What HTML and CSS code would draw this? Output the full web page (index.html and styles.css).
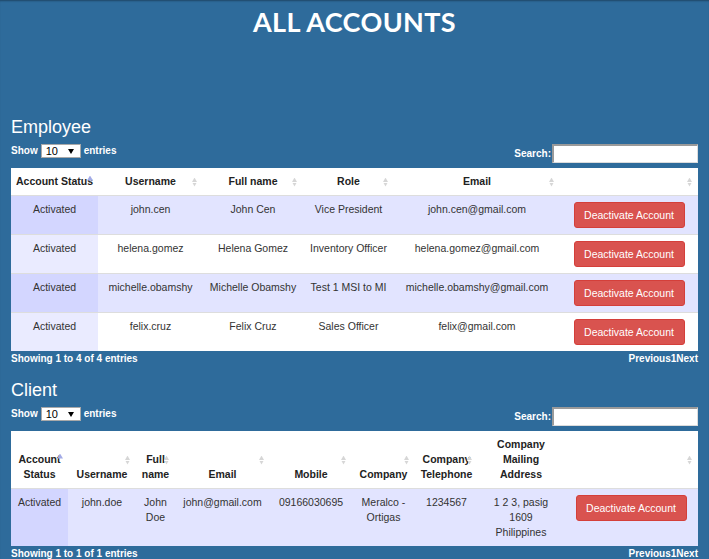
FILE: index.html
```html
<!DOCTYPE html>
<html lang="en">
<head>
<meta charset="utf-8">
<title>All Accounts</title>
<link rel="stylesheet" href="styles.css">
</head>
<body>
<h1 class="title">ALL ACCOUNTS</h1>

<section class="block">
  <h3 class="block-title">Employee</h3>
  <div class="dt-top">
    <div class="length">Show <div class="select"><span>10</span><i class="caret"></i></div> entries</div>
    <label class="filter">Search:<input type="text"></label>
  </div>
  <table class="dt emp">
    <colgroup>
      <col class="e1"><col class="e2"><col class="e3"><col class="e4"><col class="e5"><col class="e6">
    </colgroup>
    <thead>
      <tr>
        <th class="asc">Account Status</th>
        <th class="both">Username</th>
        <th class="both">Full name</th>
        <th class="both">Role</th>
        <th class="both">Email</th>
        <th class="both"></th>
      </tr>
    </thead>
    <tbody>
      <tr class="odd">
        <td class="s1">Activated</td><td>john.cen</td><td>John Cen</td><td>Vice President</td><td>john.cen@gmail.com</td>
        <td><button class="btn-danger" type="button">Deactivate Account</button></td>
      </tr>
      <tr class="even">
        <td class="s1">Activated</td><td>helena.gomez</td><td>Helena Gomez</td><td>Inventory Officer</td><td>helena.gomez@gmail.com</td>
        <td><button class="btn-danger" type="button">Deactivate Account</button></td>
      </tr>
      <tr class="odd">
        <td class="s1">Activated</td><td>michelle.obamshy</td><td>Michelle Obamshy</td><td>Test 1 MSI to MI</td><td>michelle.obamshy@gmail.com</td>
        <td><button class="btn-danger" type="button">Deactivate Account</button></td>
      </tr>
      <tr class="even">
        <td class="s1">Activated</td><td>felix.cruz</td><td>Felix Cruz</td><td>Sales Officer</td><td>felix@gmail.com</td>
        <td><button class="btn-danger" type="button">Deactivate Account</button></td>
      </tr>
    </tbody>
  </table>
  <div class="dt-bottom"><span>Showing 1 to 4 of 4 entries</span><span>Previous1Next</span></div>
</section>

<section class="block block-client">
  <h3 class="block-title">Client</h3>
  <div class="dt-top">
    <div class="length">Show <div class="select"><span>10</span><i class="caret"></i></div> entries</div>
    <label class="filter">Search:<input type="text"></label>
  </div>
  <table class="dt cli">
    <colgroup>
      <col class="c1"><col class="c2"><col class="c3"><col class="c4"><col class="c5"><col class="c6"><col class="c7"><col class="c8"><col class="c9">
    </colgroup>
    <thead>
      <tr>
        <th class="asc">Account Status</th>
        <th class="both">Username</th>
        <th class="both">Full name</th>
        <th class="both">Email</th>
        <th class="both">Mobile</th>
        <th class="both">Company</th>
        <th class="both">Company Telephone</th>
        <th>Company Mailing Address</th>
        <th class="both"></th>
      </tr>
    </thead>
    <tbody>
      <tr class="odd">
        <td class="s1">Activated</td><td>john.doe</td><td>John Doe</td><td>john@gmail.com</td><td>09166030695</td>
        <td>Meralco - Ortigas</td><td>1234567</td><td>1 2 3, pasig 1609 Philippines</td>
        <td><button class="btn-danger" type="button">Deactivate Account</button></td>
      </tr>
    </tbody>
  </table>
  <div class="dt-bottom"><span>Showing 1 to 1 of 1 entries</span><span>Previous1Next</span></div>
</section>
</body>
</html>
```
FILE: styles.css
```css
html {
  background: #2e6b9b;
}
body {
  margin: 0;
  padding: 0 11px;
  min-height: 559px;
  box-sizing: border-box;
  background: #2e6b9b;
  box-shadow: inset 0 2px 2px -1px rgba(0, 0, 0, 0.35);
  font-family: "Liberation Sans", Arial, sans-serif;
  font-size: 10.5px;
  color: #333;
}

.title {
  margin: 6px 0 0;
  font-family: Lato, "Open Sans", sans-serif;
  font-weight: 700;
  font-size: 27px;
  line-height: 32px;
  text-align: center;
  color: #fff;
  letter-spacing: 0.4px;
}

.block-title {
  margin: 79px 0 0;
  font-size: 18px;
  font-weight: 400;
  line-height: 20px;
  color: #fff;
}
.block-client .block-title {
  margin-top: 15px;
}

.dt-top {
  display: flex;
  justify-content: space-between;
  align-items: flex-start;
  margin-top: 7px;
  font-size: 10px;
  font-weight: 700;
  color: #fff;
}
.length {
  display: flex;
  align-items: center;
  gap: 3px;
  height: 14px;
  line-height: 14px;
}
.select {
  display: flex;
  align-items: center;
  box-sizing: border-box;
  width: 40px;
  height: 14px;
  padding-left: 4px;
  background: #fff;
  border: 1px solid #a9a9a9;
  color: #000;
  font-size: 11px;
  font-weight: 400;
}
.caret {
  width: 0;
  height: 0;
  margin-left: auto;
  margin-right: 6px;
  border-left: 3px solid transparent;
  border-right: 3px solid transparent;
  border-top: 5px solid #000;
}
.filter {
  display: flex;
  align-items: center;
  line-height: 13px;
}
.filter input {
  box-sizing: border-box;
  width: 146px;
  height: 19px;
  margin: 0 0 0 1px;
  padding: 0 2px;
  background: #fff;
  border-style: solid;
  border-width: 2px 1px 1px 2px;
  border-color: #9a9a9a #dcdcdc #dcdcdc #9a9a9a;
  font-family: "Liberation Sans", Arial, sans-serif;
  font-size: 10.5px;
  outline: none;
}

.dt {
  width: 100%;
  margin-top: 5px;
  table-layout: fixed;
  border-collapse: separate;
  border-spacing: 0;
  background: #fff;
}
.emp .e1 { width: 87px; }
.emp .e2 { width: 105px; }
.emp .e3 { width: 100px; }
.emp .e4 { width: 91px; }
.emp .e5 { width: 166px; }
.emp .e6 { width: 138px; }

.cli .c1 { width: 57px; }
.cli .c2 { width: 68px; }
.cli .c3 { width: 39px; }
.cli .c4 { width: 95px; }
.cli .c5 { width: 82px; }
.cli .c6 { width: 63px; }
.cli .c7 { width: 63px; }
.cli .c8 { width: 86px; }
.cli .c9 { width: 134px; }

.dt th {
  position: relative;
  padding: 6px 5px;
  line-height: 15px;
  font-weight: 700;
  color: #222;
  text-align: center;
  vertical-align: bottom;
}
.emp th,
.emp td {
  white-space: nowrap;
}
.dt th.both::after,
.dt th.asc::after {
  content: "";
  position: absolute;
  top: 50%;
}
.dt th.both::after {
  right: 6px;
  width: 5px;
  height: 9px;
  margin-top: -4px;
  background: linear-gradient(#d6d6d6 0 45%, #fff 45% 55%, #d6d6d6 55% 100%);
  clip-path: polygon(50% 0, 100% 50%, 50% 100%, 0 50%);
}
.dt th.asc::after {
  right: 5px;
  width: 6px;
  height: 5px;
  margin-top: -6px;
  background: #a3abe6;
  clip-path: polygon(50% 0, 100% 100%, 0 100%);
}

.dt td {
  padding: 6px;
  line-height: 15px;
  text-align: center;
  vertical-align: top;
  border-top: 1px solid #ddd;
}
.dt tr.odd td { background: #e2e4ff; }
.dt tr.odd td.s1 { background: #d3d6ff; }
.dt tr.even td { background: #fff; }
.dt tr.even td.s1 { background: #eaebff; }

.btn-danger {
  display: inline-block;
  box-sizing: border-box;
  width: 111px;
  margin: 0;
  padding: 4.5px 0;
  font-family: "Liberation Sans", Arial, sans-serif;
  font-size: 10.5px;
  line-height: 15px;
  color: #fff;
  background: #d9534f;
  border: 1px solid #d43f3a;
  border-radius: 3px;
  white-space: nowrap;
  text-align: center;
  cursor: pointer;
}

.dt-bottom {
  display: flex;
  justify-content: space-between;
  margin-top: 1px;
  font-size: 10px;
  font-weight: 700;
  line-height: 13px;
  color: #fff;
}
```
